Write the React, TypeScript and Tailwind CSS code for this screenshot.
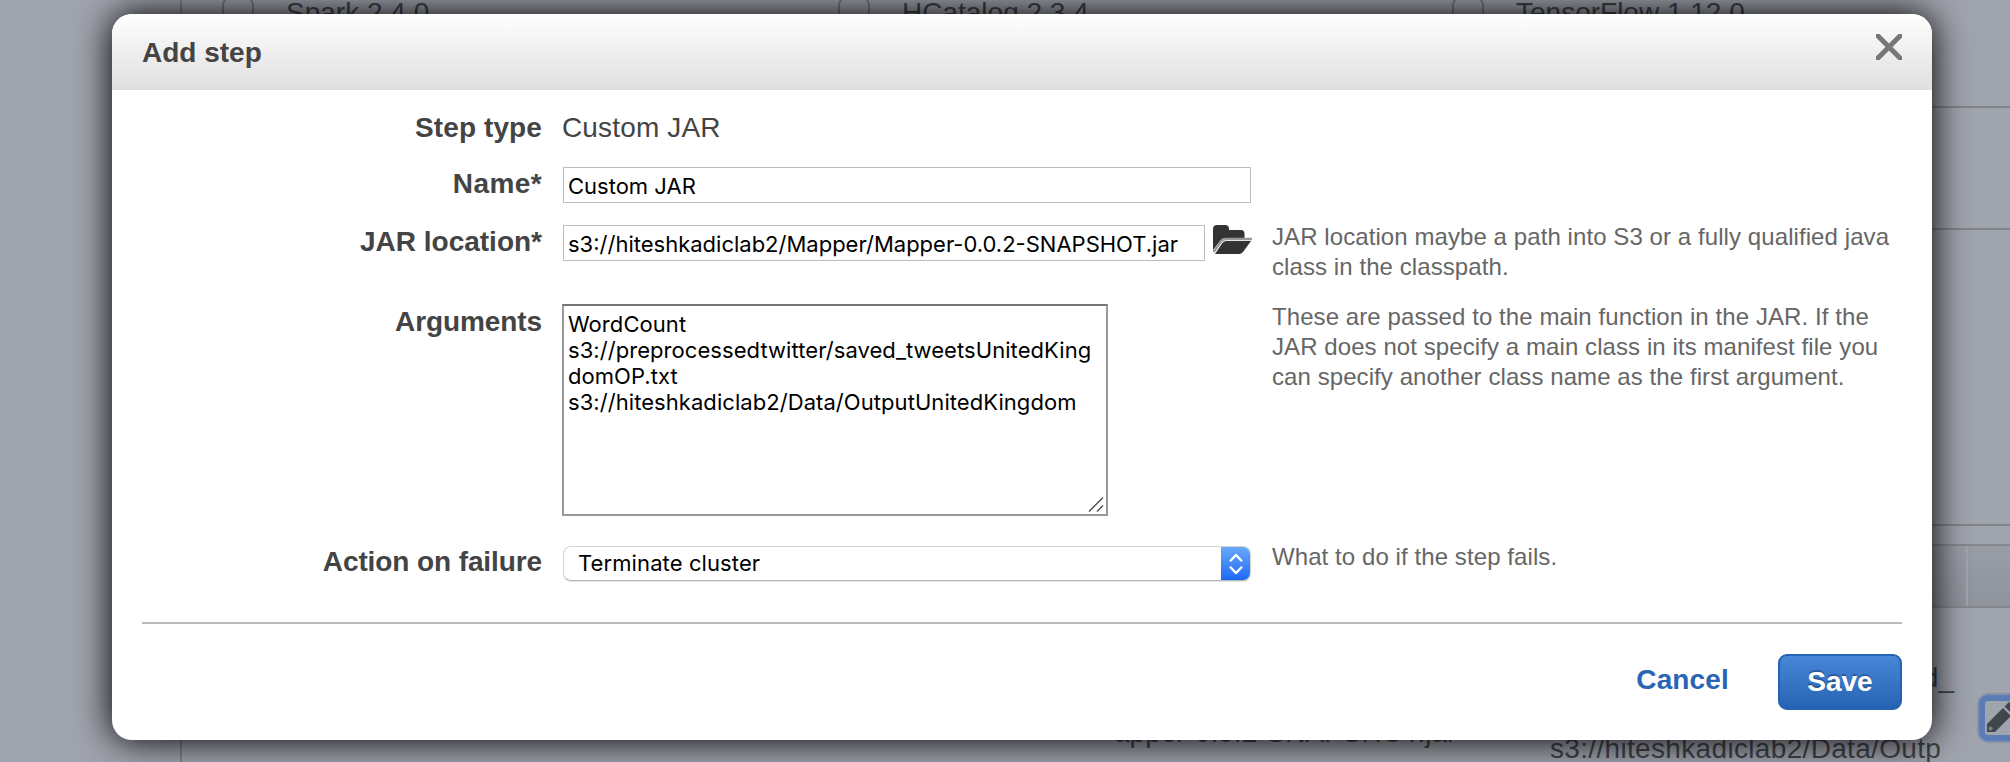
import React from "react";

function Label({ children, className = "" }: { children: React.ReactNode; className?: string }) {
  return (
    <div className={"w-[430px] shrink-0 whitespace-nowrap text-right text-[28px] font-bold leading-[34px] text-[#444] " + className}>
      {children}
    </div>
  );
}

function Help({ lines, className = "" }: { lines: string[]; className?: string }) {
  return (
    <div className={"whitespace-nowrap text-[24px] leading-[30px] tracking-[0.08px] text-[#666] " + className}>
      {lines.map((l) => (
        <div key={l}><span>{l}</span></div>
      ))}
    </div>
  );
}

function AppBox({ label, left }: { label: string; left: string }) {
  return (
    <div className={"absolute top-0 flex " + left}>
      <div className="-mt-[3px] h-[60px] w-[32px] rounded-[8px] border-2 border-[#777b82]" />
      <div className="absolute left-[64px] -top-[4px] whitespace-nowrap text-[28px] leading-[34px] text-[#40444b]">{label}</div>
    </div>
  );
}

function Backdrop() {
  return (
    <div className="absolute inset-0 bg-[#a0a4ad]">
      <div className="absolute left-[180px] top-0 h-[108px] w-[2px] bg-[#80848b]" />
      <AppBox label="Spark 2.4.0" left="left-[222px]" />
      <AppBox label="HCatalog 2.3.4" left="left-[838px]" />
      <AppBox label="TensorFlow 1.12.0" left="left-[1452px]" />
      <div className="absolute right-0 top-[106px] h-[2px] w-[120px] bg-[#80848b]" />
      <div className="absolute right-0 top-[228px] h-[2px] w-[120px] bg-[#80848b]" />
      <div className="absolute right-0 top-[524px] h-[2px] w-[120px] bg-[#80848b]" />
      <div className="absolute right-0 top-[544px] flex h-[64px] w-[120px] border-y-2 border-[#85898f] bg-gradient-to-b from-[#999da6] to-[#8f939c]">
        <div className="w-[78px] border-r-2 border-[#a0a4ad]" />
      </div>
      <div className="absolute left-[180px] top-[700px] h-[62px] w-[2px] bg-[#80848b]" />
      <div className="absolute left-[1114px] top-[716px] whitespace-nowrap text-[28px] leading-[34px] text-[#40444b]">apper-0.0.2-SNAPSHOT.jar</div>
      <div className="absolute right-[56px] top-[661px] whitespace-nowrap text-[28px] leading-[34px] text-[#40444b]">d_</div>
      <div className="absolute left-[1550px] top-[732px] whitespace-nowrap text-[28px] leading-[34px] tracking-[0.33px] text-[#40444b]">s3://hiteshkadiclab2/Data/Outp</div>
      <div className="absolute left-[1977px] top-[693px] h-[50px] w-[60px] rounded-[12px] border-2 border-[#8492ae]">
        <div className="h-full w-full rounded-[9px] border-[6px] border-[#5b7cb4]">
          <svg className="-ml-px" width="36" height="34" viewBox="0 0 36 34">
            <path d="M3 31V23L19 7L27 15L11 31Z" fill="#41454c" />
            <path d="M20.500 5.500L25 1L33 9L28.500 13.500Z" fill="#41454c" />
            <circle cx="6.500" cy="27.500" r="2" fill="#7b7f87" />
          </svg>
        </div>
      </div>
    </div>
  );
}

export default function App() {
  return (
    <div className="relative h-[762px] w-[2010px] overflow-hidden font-['Liberation_Sans',Arial,sans-serif]">
      <Backdrop />
      <div className="relative ml-[112px] pt-[14px]">
        <div className="flex h-[726px] w-[1820px] flex-col rounded-[20px] bg-white shadow-[0_0_36px_1px_rgba(0,0,0,1)]">
          <header className="flex h-[76px] items-start justify-between rounded-t-[20px] bg-gradient-to-b from-white to-[#dfdfdf] pl-[30px] pr-[30px]">
            <h1 className="pt-[22px] text-[28px] font-bold leading-[34px] text-[#444]">Add step</h1>
            <svg className="mt-[20px]" width="26" height="26" viewBox="0 0 26 26">
              <path d="M0 0L26 26M26 0L0 26" stroke="#777" strokeWidth="5" />
            </svg>
          </header>

          <main className="flex flex-col">
            <div className="flex h-[77px] pt-[21px]">
              <Label className="tracking-[0.1px]">Step type</Label>
              <div className="ml-[20px] whitespace-nowrap text-[28px] leading-[34px] tracking-[0.15px] text-[#444]">Custom JAR</div>
            </div>

            <div className="flex h-[58px]">
              <Label className="tracking-[0.4px]">Name*</Label>
              <div className="ml-[21px] flex h-[36px] w-[688px] items-center border border-[#bdbdbd] bg-white pl-[4px] font-[Inter,sans-serif] text-[22px] text-black">
                <span className="pt-[2px]">Custom JAR</span>
              </div>
            </div>

            <div className="flex h-[79px]">
              <Label>JAR location*</Label>
              <div className="ml-[21px] flex h-[36px] w-[642px] items-center whitespace-nowrap border border-[#bdbdbd] bg-white pl-[4px] font-[Inter,sans-serif] text-[22px] text-black">
                <span className="pt-[2px]">s3://hiteshkadiclab2/Mapper/Mapper-0.0.2-SNAPSHOT.jar</span>
              </div>
              <svg className="ml-[8px]" width="39" height="30" viewBox="0 0 39 30">
                <path d="M0 25V4Q0 0 4 0H12Q16 0 16 4V5H28Q31.500 5 31.500 9V13H13Q9 13 7 16Z" fill="#333" />
                <path d="M0.500 27L8 16.500Q10 14 13 14H39" fill="none" stroke="#999" strokeWidth="2.500" />
                <path d="M2 29L9 18.500Q10.500 16 13 16H38L30 27Q28.500 29 26 29Z" fill="#333" />
              </svg>
              <Help className="ml-[20px] -mt-[3px]" lines={["JAR location maybe a path into S3 or a fully qualified java", "class in the classpath."]} />
            </div>

            <div className="flex h-[242px]">
              <Label className="pt-[1px] tracking-[-0.1px]">Arguments</Label>
              <div className="relative ml-[20px] h-[212px] w-[546px] whitespace-nowrap border-2 border-[#999] border-t-[#757575] pl-[4px] pt-[5px] font-[Inter,sans-serif] text-[22px] leading-[26px] tracking-[0.06px] text-black">
                <div><span>WordCount</span></div>
                <div><span>s3://preprocessedtwitter/saved_tweetsUnitedKing</span></div>
                <div><span>domOP.txt</span></div>
                <div><span>s3://hiteshkadiclab2/Data/OutputUnitedKingdom</span></div>
                <svg className="absolute bottom-[2px] right-[2px]" width="16" height="15" viewBox="0 0 16 15">
                  <path d="M1 14.500L15 .5M9 14.500L15 8.500" stroke="#555" strokeWidth="1.500" />
                </svg>
              </div>
              <Help className="ml-[164px] -mt-[2px]" lines={["These are passed to the main function in the JAR. If the", "JAR does not specify a main class in its manifest file you", "can specify another class name as the first argument."]} />
            </div>

            <div className="flex h-[76px]">
              <Label className="-mt-[1px] tracking-[-0.1px]">Action on failure</Label>
              <div className="ml-[21px] flex h-[35px] w-[688px] shrink-0 items-stretch justify-between overflow-hidden rounded-[8px] border border-[#d4d4d4] border-b-[#b5b5b5] bg-white font-[Inter,sans-serif] text-[22px] text-black shadow-[0_1px_1px_rgba(0,0,0,0.1)]">
                <span className="pl-[14px] leading-[33px] tracking-[0.1px]">Terminate cluster</span>
                <div className="-mb-px -mr-px -mt-px flex w-[30px] items-center justify-center bg-gradient-to-b from-[#6ba9f8] to-[#1a66f4]">
                  <svg width="16" height="22" viewBox="0 0 16 22">
                    <path d="M2.700 7.500L8 2L13.300 7.500M2.700 14.500L8 20L13.300 14.500" fill="none" stroke="white" strokeWidth="2.500" strokeLinecap="round" strokeLinejoin="round" />
                  </svg>
                </div>
              </div>
              <Help className="ml-[21px] -mt-[4px]" lines={["What to do if the step fails."]} />
            </div>
          </main>

          <footer className="mx-[30px] flex justify-end border-t-2 border-[#bbb] pt-[30px]">
            <div className="mr-[49px] pt-[9px] text-[28px] font-bold leading-[34px] tracking-[0.15px] text-[#2a65b5]">Cancel</div>
            <div className="flex h-[56px] w-[124px] justify-center rounded-[9px] border-2 border-[#2763b3] bg-gradient-to-b from-[#4787d8] to-[#2763b3] pt-[9px] text-[28px] font-bold leading-[34px] text-white [text-shadow:0_-2px_0_rgba(0,0,0,0.25)]">Save</div>
          </footer>
        </div>
      </div>
    </div>
  );
}
